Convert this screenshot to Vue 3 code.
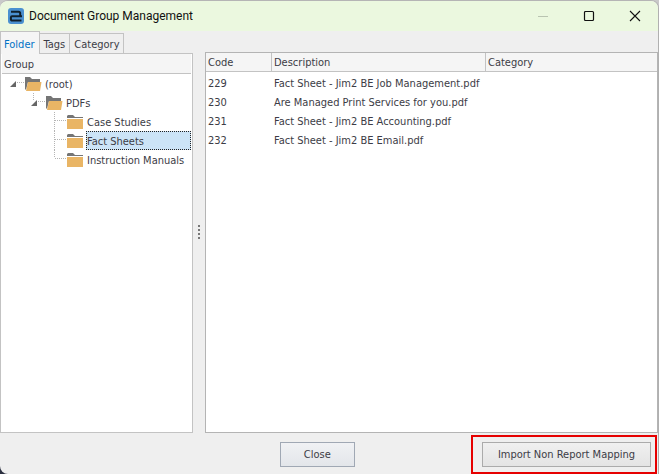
<script setup>
import { ref } from 'vue'

const tabs = ['Folder', 'Tags', 'Category']
const activeTab = ref('Folder')

// `line` is how far the vertical connector runs down through the row.
const nodes = [
  { name: '(root)', depth: 0, open: true, line: 0 },
  { name: 'PDFs', depth: 1, open: true, line: 8 },
  { name: 'Case Studies', depth: 2, open: false, line: 19 },
  { name: 'Fact Sheets', depth: 2, open: false, line: 19 },
  { name: 'Instruction Manuals', depth: 2, open: false, line: 8 },
]
const selected = ref('Fact Sheets')

const documents = [
  { code: '229', description: 'Fact Sheet - Jim2 BE Job Management.pdf', category: '' },
  { code: '230', description: 'Are Managed Print Services for you.pdf', category: '' },
  { code: '231', description: 'Fact Sheet - Jim2 BE Accounting.pdf', category: '' },
  { code: '232', description: 'Fact Sheet - Jim2 BE Email.pdf', category: '' },
]
</script>

<template>
  <div class="window">
    <header class="titlebar">
      <svg class="logo" viewBox="0 0 16 16" aria-hidden="true">
        <rect width="16" height="16" rx="3" fill="#4a90d0" />
        <path d="M3 3.7H10.5Q12.2 3.7 12.2 5.4V8.2H4Q2.9 8.2 2.9 9.4V11Q2.9 12.6 4.5 12.6H13.5M12 8.2H14" fill="none" stroke="#10202c" stroke-width="2" />
      </svg>
      <h1>Document Group Management</h1>
      <button class="caption" aria-label="Minimize" disabled>
        <svg viewBox="0 0 12 12"><path d="M1 6.5H11" stroke="#b9c4b1" /></svg>
      </button>
      <button class="caption" aria-label="Maximize">
        <svg viewBox="0 0 12 12"><rect x="1.5" y="1.5" width="9" height="9" rx="1" fill="none" stroke="#111" stroke-width="1.2" /></svg>
      </button>
      <button class="caption" aria-label="Close window">
        <svg viewBox="0 0 12 12"><path d="M1 1L11 11M11 1L1 11" stroke="#111" stroke-width="1.1" /></svg>
      </button>
    </header>

    <main class="content">
      <section class="sidebar">
        <div class="tabs" role="tablist">
          <button
            v-for="tab in tabs"
            :key="tab"
            role="tab"
            class="tab"
            :class="{ active: tab === activeTab }"
            :aria-selected="tab === activeTab"
            @click="activeTab = tab"
          >{{ tab }}</button>
        </div>
        <div class="panel" role="tabpanel">
          <div class="group">Group</div>
          <ul class="tree" role="tree">
            <li v-for="node in nodes" :key="node.name" class="node" :class="'depth-' + node.depth" role="treeitem" :aria-selected="node.name === selected">
              <svg class="branch" viewBox="0 0 25 19" aria-hidden="true">
                <path v-if="node.line" :d="'M12.5 0V' + node.line" stroke="#b4b4b4" stroke-dasharray="1 1" />
                <path :d="node.open ? 'M17 8.5H24' : 'M13 8.5H24'" stroke="#b4b4b4" stroke-dasharray="1 1" />
                <path v-if="node.open" d="M16 7V13H10Z" fill="#666" />
              </svg>
              <svg v-if="node.open" class="folder" viewBox="0 0 17 19" aria-hidden="true">
                <path d="M0 3H5L7 5H15V8H3L1 16L0 15Z" fill="#757575" />
                <path d="M3 8H16.5L15 17H1Z" fill="#e9b565" />
              </svg>
              <svg v-else class="folder" viewBox="0 0 17 19" aria-hidden="true">
                <path d="M0 4L1 3H6L8 5H16V6H0Z" fill="#757575" />
                <path d="M0 7H16V17H0Z" fill="#e9b565" />
              </svg>
              <button class="label" :class="{ selected: node.name === selected }" @click="selected = node.name">{{ node.name }}</button>
            </li>
          </ul>
        </div>
      </section>

      <div class="splitter" role="separator" aria-orientation="vertical">
        <i></i><i></i><i></i><i></i>
      </div>

      <section class="list">
        <table>
          <thead>
            <tr>
              <th class="code">Code</th>
              <th class="description">Description</th>
              <th>Category</th>
            </tr>
          </thead>
          <tbody>
            <tr v-for="doc in documents" :key="doc.code">
              <td>{{ doc.code }}</td>
              <td>{{ doc.description }}</td>
              <td>{{ doc.category }}</td>
            </tr>
          </tbody>
        </table>
      </section>
    </main>

    <footer class="actions">
      <button class="action close">Close</button>
      <div class="highlighted">
        <button class="action">Import Non Report Mapping</button>
      </div>
    </footer>
  </div>
</template>

<style>
body {
  background: linear-gradient(#c9c9c9 50%, #2c3040 50%);
}
</style>

<style scoped>
.window {
  box-sizing: border-box;
  min-height: 100vh;
  display: flex;
  flex-direction: column;
  overflow: hidden;
  border-top: 1px solid #b5b5b5;
  border-right: 1px solid #b0b0b0;
  border-radius: 8px 8px 0 8px;
  background: #efefef;
  color: #3c3c46;
  font: 11px/14px "DejaVu Sans Condensed", "DejaVu Sans", sans-serif;
}

button {
  margin: 0;
  padding: 0;
  border: 0;
  background: none;
  color: inherit;
  font: inherit;
}

.titlebar {
  height: 30px;
  display: flex;
  align-items: center;
  background: #ebf8df;
}

.logo {
  width: 16px;
  height: 16px;
  margin: 0 5px 0 8px;
}

h1 {
  flex: 1;
  margin: 0;
  color: #111;
  font: 12px/16px Roboto, sans-serif;
}

.caption {
  width: 46px;
  height: 30px;
  display: grid;
  place-items: center;
}

.caption svg {
  width: 12px;
  height: 12px;
}

.content {
  flex: 1;
  display: flex;
}

.sidebar {
  width: 193px;
  display: flex;
  flex-direction: column;
}

.tabs {
  height: 22px;
  display: flex;
  align-items: flex-end;
}

.tab {
  height: 20px;
  padding: 3px 4px 0;
  border: 1px solid #c3c3c3;
  border-width: 1px 1px 0 0;
}

.tab.active {
  height: 23px;
  margin-bottom: -1px;
  padding: 3px 4px 0 3px;
  border-left-width: 1px;
  background: #f5f5f5;
  color: #0072c6;
  position: relative;
}

.panel {
  flex: 1;
  padding: 0 1px 1px;
  border: 1px solid #c3c3c3;
  background: #fff;
}

.group {
  height: 19px;
  padding-left: 2px;
  border-bottom: 1px solid #c3c3c3;
  background: #f5f5f5;
  line-height: 22px;
}

.tree {
  margin: 0;
  padding: 0;
  list-style: none;
}

.node {
  height: 19px;
  display: flex;
}

.depth-1 {
  padding-left: 21px;
}

.depth-2 {
  padding-left: 42px;
}

.branch {
  flex: none;
  width: 25px;
  height: 19px;
  margin-left: -2px;
}

.folder {
  flex: none;
  width: 17px;
  height: 19px;
  margin-right: 2px;
}

.label {
  flex: 1;
  padding-top: 2px;
  border: 1px dotted transparent;
  text-align: left;
  white-space: nowrap;
}

.label.selected {
  border-color: #222;
  background: #cce4f7;
}

.splitter {
  width: 12px;
  display: flex;
  flex-direction: column;
  align-items: center;
  justify-content: center;
  gap: 2px;
}

.splitter i {
  width: 2px;
  height: 2px;
  background: #777;
}

.list {
  flex: 1;
  margin-top: 21px;
  border: 1px solid #b4b4b4;
  background: #fff;
}

table {
  width: 100%;
  border-collapse: separate;
  border-spacing: 0;
  table-layout: fixed;
}

th {
  height: 17px;
  padding: 1px 2px 0;
  border-right: 1px solid #c3c3c3;
  border-bottom: 1px solid #c3c3c3;
  background: #f5f5f5;
  font-weight: normal;
  text-align: left;
}

th:last-child {
  border-right: 0;
}

.code {
  width: 61px;
}

.description {
  width: 209px;
}

td {
  height: 19px;
  padding: 0 2px;
  white-space: nowrap;
}

tbody::before {
  content: "";
  display: block;
  height: 2px;
}

.actions {
  display: grid;
  grid-template-columns: 11fr 75px 5fr 169px;
  padding: 9px 7px 7px 0;
}

.action {
  width: 100%;
  height: 25px;
  border: 1px solid #ababab;
  background: linear-gradient(#f0f0f0, #e4e4e4);
}

.close {
  grid-column: 2;
  border-color: #a0a8b4;
  background: linear-gradient(#f0f1f4, #e3e6ea);
}

.highlighted {
  grid-column: 4;
  position: relative;
}

.highlighted::after {
  content: "";
  position: absolute;
  inset: -7px -6px -7px -11px;
  border: 2px solid #e60000;
  pointer-events: none;
}
</style>
